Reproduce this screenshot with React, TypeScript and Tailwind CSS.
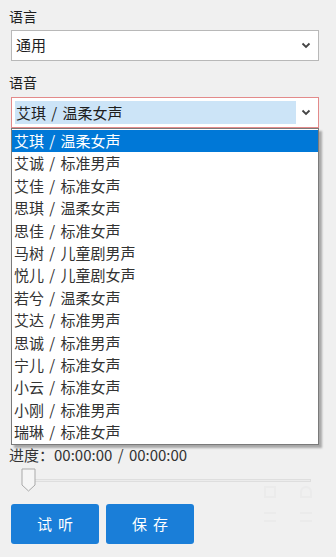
import React from 'react';

const voices = [
  '艾琪 / 温柔女声',
  '艾诚 / 标准男声',
  '艾佳 / 标准女声',
  '思琪 / 温柔女声',
  '思佳 / 标准女声',
  '马树 / 儿童剧男声',
  '悦儿 / 儿童剧女声',
  '若兮 / 温柔女声',
  '艾达 / 标准男声',
  '思诚 / 标准男声',
  '宁儿 / 标准女声',
  '小云 / 标准女声',
  '小刚 / 标准男声',
  '瑞琳 / 标准女声',
];

const Chevron = () => (
  <svg width="10" height="7" viewBox="0 0 10 7" className="shrink-0">
    <path d="M1.5 1.5 L5 5 L8.5 1.5" fill="none" stroke="#444" strokeWidth="1.8" />
  </svg>
);

// ghost icons faintly visible in the lower right corner
const Ghost = () => (
  <div className="absolute left-[264px] top-[486px] grid grid-cols-2 gap-x-[24px] gap-y-[14px] opacity-[0.02]">
    <div className="w-[12px] h-[12px] border-2 border-gray-800" />
    <div className="w-[12px] h-[12px] border-2 border-gray-800 rounded-t-full" />
    <div className="w-[12px] h-[10px] border-y-2 border-gray-800" />
    <div className="w-[12px] h-[10px] border-y-2 border-gray-800" />
  </div>
);

export default function App() {
  return (
    <div
      className="relative w-[336px] h-[557px] overflow-hidden bg-[#f0f0f0] text-[15px] text-[#1e1e1e] [word-spacing:2px]"
      style={{ fontFamily: '"Noto Sans CJK SC", "Microsoft YaHei", sans-serif' }}
    >
      <Ghost />
      <div className="pl-[11px] pr-[17px] pt-[5px]">
        <div className="h-[22px] leading-[22px] -ml-[2px] text-[14px]">语言</div>
        <div className="mt-[3px] h-[31px] bg-white border border-[#b8b8b8] flex items-center pl-[4px] pr-[7px]">
          <span className="flex-1">通用</span>
          <Chevron />
        </div>
        <div className="mt-[10px] h-[22px] leading-[22px] -ml-[2px] text-[14px]">语音</div>
        <div className="relative mt-[4px] h-[31px] bg-white border border-[#e38a8a] flex items-center pl-[3px] pr-[7px]">
          <span className="w-[281px] h-[23px] leading-[23px] bg-[#cce4f7] pl-[1px]">{voices[0]}</span>
          <span className="flex-1" />
          <Chevron />
          <div className="absolute left-[-1px] top-[30px] w-[308px] bg-white border border-[#7a7a7a] shadow-[3px_3px_2px_rgba(0,0,0,0.3)] py-[1px] z-10">
            {voices.map((v, i) => (
              <div
                key={v}
                className={
                  i === 0
                    ? 'h-[22.4px] leading-[22.4px] pl-[2px] bg-[#0078d7] text-white'
                    : 'h-[22.4px] leading-[22.4px] pl-[2px] text-[#333]'
                }
              >
                {v}
              </div>
            ))}
          </div>
        </div>
        <div className="mt-[316px] h-[22px] leading-[22px] -ml-[2px] text-[#333]">进度：00:00:00 / 00:00:00</div>
        <div className="relative mt-[2px] h-[24px]">
          <div className="absolute left-[22px] top-[11px] w-[278px] h-[3px] bg-[#ececec] border border-[#dedede]" />
          <svg className="absolute left-[10px] top-0" width="15" height="24" viewBox="0 0 15 24">
            <path d="M1 1 H14 V17 L7.5 23 L1 17 Z" fill="#f5f5f5" stroke="#a9a9a9" strokeWidth="1" />
          </svg>
        </div>
        <div className="mt-[12px] flex gap-[7px]">
          <button className="w-[88px] h-[40px] rounded-[3px] bg-[#1a7ed8] text-white text-[15px] tracking-[6px] pl-[6px]">试听</button>
          <button className="w-[88px] h-[40px] rounded-[3px] bg-[#1a7ed8] text-white text-[15px] tracking-[6px] pl-[6px]">保存</button>
        </div>
      </div>
    </div>
  );
}
